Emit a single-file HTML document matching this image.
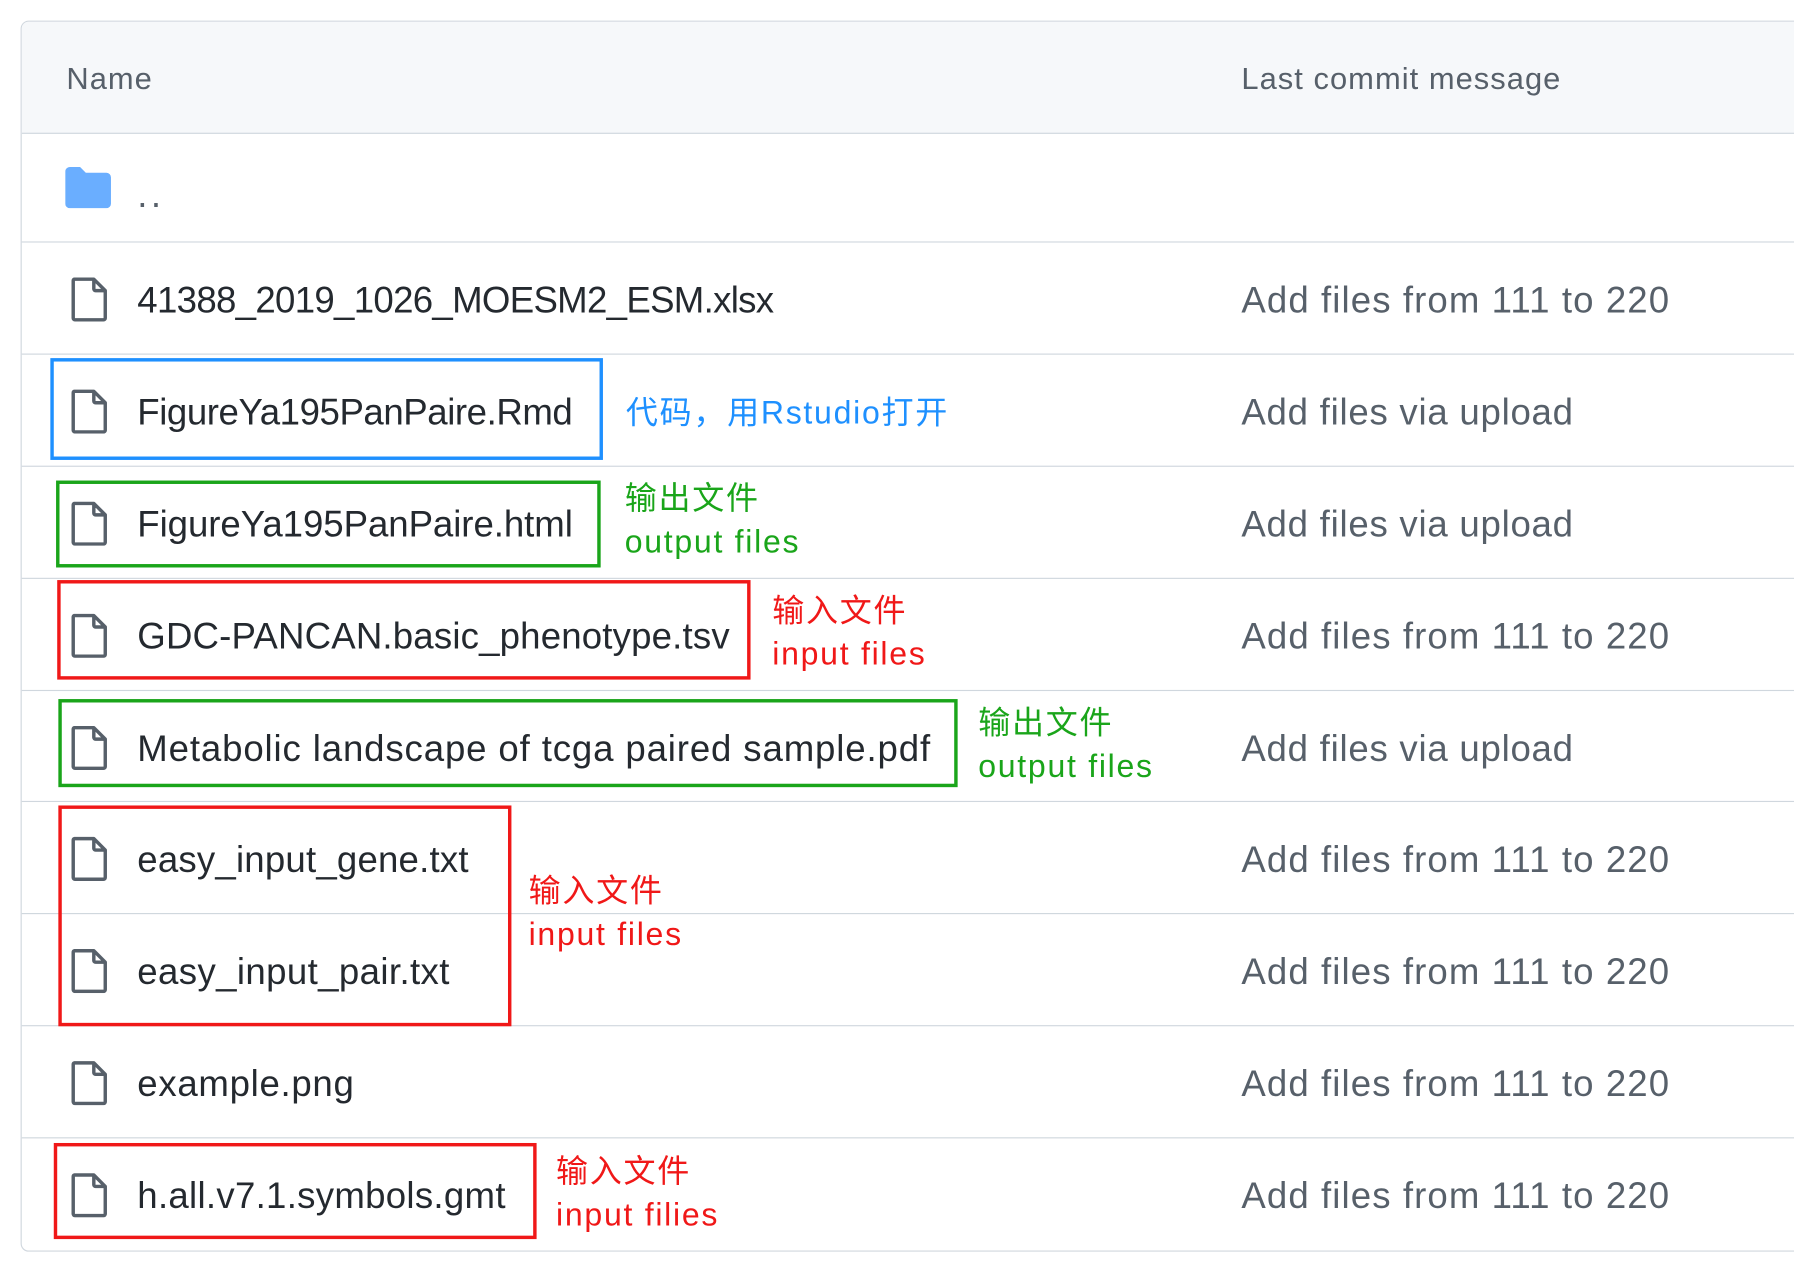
<!DOCTYPE html>
<html><head><meta charset="utf-8"><style>
html,body{margin:0;padding:0;background:#fff;width:1794px;height:1264px;overflow:hidden}
#s{position:absolute;left:0;top:0;width:1568px;height:1105px;transform:scale(1.14413);transform-origin:0 0;font-family:"Liberation Sans","Noto Sans CJK SC",sans-serif}
.box{position:absolute;left:18px;top:18px;width:1600px;height:1074px;border:1.5px solid #d0d7de;border-radius:7px;overflow:hidden}
.hdr{position:absolute;left:0;top:0;right:0;height:97px;background:#f6f8fa;border-bottom:1.5px solid #d0d7de}
.ln{position:absolute;left:0;right:-60px;height:0;border-top:1.5px solid #d0d7de}
.t{position:absolute;line-height:40px;height:40px;white-space:nowrap}
.h{font-size:27px;color:#57606a;letter-spacing:0.9px}
.f{font-size:32px;color:#24292f;left:120px;letter-spacing:0.75px}
.c{font-size:32px;color:#57606a;left:1085px;letter-spacing:0.95px}
.v{letter-spacing:0.65px}
.fi{position:absolute;left:62px;width:33px;height:39px}
.r{position:absolute;border:3px solid}
.a{position:absolute;font-size:28px;line-height:38px;white-space:nowrap;letter-spacing:1.5px}
</style></head><body><div id="s">
<div class="box"><div class="hdr"></div></div>
<div class="ln" style="left:19px;top:211px;width:1560px"></div>
<div class="ln" style="left:19px;top:309px;width:1560px"></div>
<div class="ln" style="left:19px;top:407px;width:1560px"></div>
<div class="ln" style="left:19px;top:505px;width:1560px"></div>
<div class="ln" style="left:19px;top:603px;width:1560px"></div>
<div class="ln" style="left:19px;top:700px;width:1560px"></div>
<div class="ln" style="left:19px;top:798px;width:1560px"></div>
<div class="ln" style="left:19px;top:896px;width:1560px"></div>
<div class="ln" style="left:19px;top:994px;width:1560px"></div>

<div class="t h" style="left:58px;top:49px">Name</div>
<div class="t h" style="left:1085px;top:49px">Last commit message</div>

<svg style="position:absolute;left:57px;top:146px" width="40" height="36" viewBox="0 0 40 36"><path d="M0 4a4 4 0 0 1 4-4h9l5 5h18a4 4 0 0 1 4 4v23a4 4 0 0 1-4 4H4a4 4 0 0 1-4-4z" fill="#6aaeff"/></svg>
<div class="t f" style="top:150px;color:#57606a;letter-spacing:3px">..</div>

<svg style="display:none"><symbol id="fl" viewBox="0 0 33 39"><path d="M3 2h17l10 10v24a1.5 1.5 0 0 1-1.5 1.5h-25A1.5 1.5 0 0 1 2 36V3.5A1.5 1.5 0 0 1 3 2zM20 2v8.5a1.5 1.5 0 0 0 1.5 1.5H30" fill="none" stroke="#57606a" stroke-width="3" stroke-linejoin="round"/></symbol></svg>

<svg class="fi" style="top:242px"><use href="#fl"/></svg>
<div class="t f" style="top:242px;letter-spacing:-0.6px">41388_2019_1026_MOESM2_ESM.xlsx</div>
<div class="t c" style="top:242px">Add files from 111 to 220</div>

<svg class="fi" style="top:340px"><use href="#fl"/></svg>
<div class="t f" style="top:340px;letter-spacing:-0.38px">FigureYa195PanPaire.Rmd</div>
<div class="t c v" style="top:340px">Add files via upload</div>

<svg class="fi" style="top:438px"><use href="#fl"/></svg>
<div class="t f" style="top:438px;letter-spacing:-0.05px">FigureYa195PanPaire.html</div>
<div class="t c v" style="top:438px">Add files via upload</div>

<svg class="fi" style="top:536px"><use href="#fl"/></svg>
<div class="t f" style="top:536px;letter-spacing:0.15px">GDC-PANCAN.basic_phenotype.tsv</div>
<div class="t c" style="top:536px">Add files from 111 to 220</div>

<svg class="fi" style="top:634px"><use href="#fl"/></svg>
<div class="t f" style="top:634px">Metabolic landscape of tcga paired sample.pdf</div>
<div class="t c v" style="top:634px">Add files via upload</div>

<svg class="fi" style="top:731px"><use href="#fl"/></svg>
<div class="t f" style="top:731px;letter-spacing:0.17px">easy_input_gene.txt</div>
<div class="t c" style="top:731px">Add files from 111 to 220</div>

<svg class="fi" style="top:829px"><use href="#fl"/></svg>
<div class="t f" style="top:829px;letter-spacing:0.33px">easy_input_pair.txt</div>
<div class="t c" style="top:829px">Add files from 111 to 220</div>

<svg class="fi" style="top:927px"><use href="#fl"/></svg>
<div class="t f" style="top:927px;letter-spacing:0.6px">example.png</div>
<div class="t c" style="top:927px">Add files from 111 to 220</div>

<svg class="fi" style="top:1025px"><use href="#fl"/></svg>
<div class="t f" style="top:1025px;letter-spacing:0.25px">h.all.v7.1.symbols.gmt</div>
<div class="t c" style="top:1025px">Add files from 111 to 220</div>

<div class="r" style="border-color:#1e90ff;left:44px;top:313px;width:477px;height:83px"></div>
<div class="r" style="border-color:#1aa51a;left:49px;top:420px;width:470px;height:70px"></div>
<div class="r" style="border-color:#f01818;left:50px;top:507px;width:600px;height:81px"></div>
<div class="r" style="border-color:#1aa51a;left:51px;top:611px;width:780px;height:71px"></div>
<div class="r" style="border-color:#f01818;left:51px;top:704px;width:390px;height:187px"></div>
<div class="r" style="border-color:#f01818;left:47px;top:999px;width:416px;height:78px"></div>

<div class="a" style="left:547px;top:342px;color:#1e90ff">代码，用Rstudio打开</div>
<div class="a" style="left:546px;top:417px;color:#1aa51a">输出文件<br>output files</div>
<div class="a" style="left:675px;top:515px;color:#f01818">输入文件<br>input files</div>
<div class="a" style="left:855px;top:613px;color:#1aa51a">输出文件<br>output files</div>
<div class="a" style="left:462px;top:760px;color:#f01818">输入文件<br>input files</div>
<div class="a" style="left:486px;top:1005px;color:#f01818">输入文件<br>input filies</div>
</div></body></html>
